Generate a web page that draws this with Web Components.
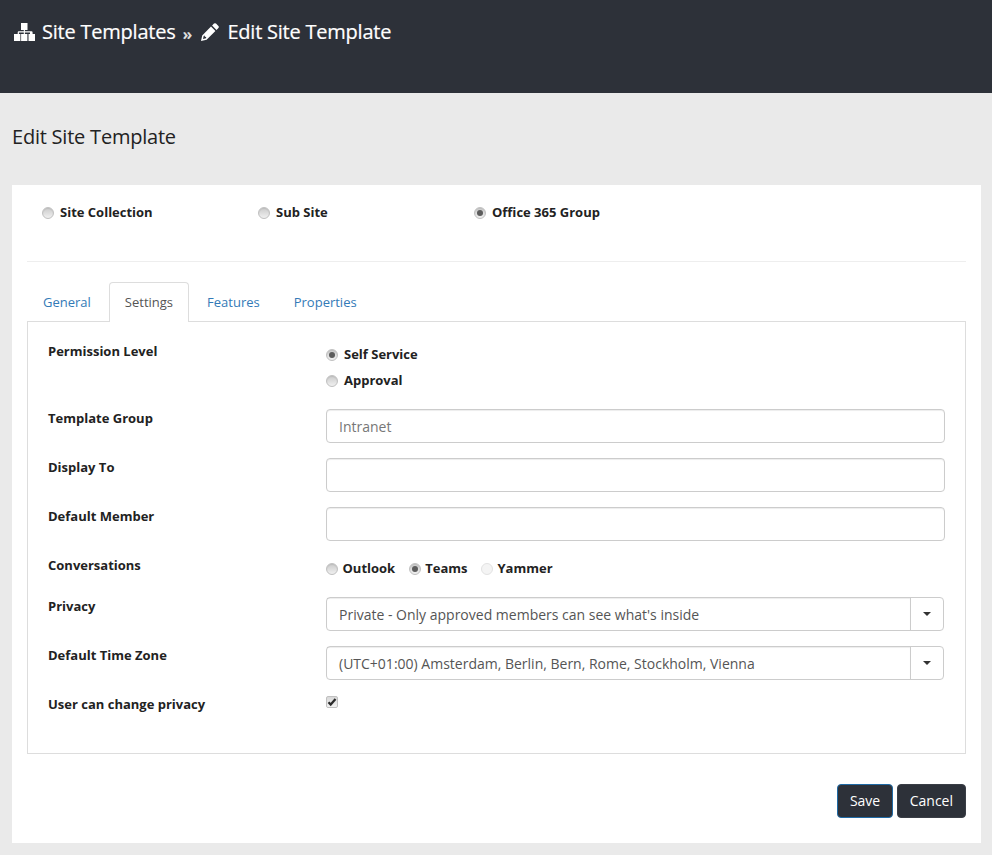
<!DOCTYPE html>
<html><head><meta charset="utf-8"><title>Edit Site Template</title>
<style>
html,body{margin:0;padding:0;background:#eaeaea;font-family:"Open Sans",sans-serif;color:#333;font-size:13px}
</style></head><body>
<page-header>
  <svg slot="a" width="21" height="18" viewBox="0 0 21 18"><path fill="#fff" d="M7 0h6.500v7h-2.600v1.300h6.600a1.100 1.100 0 0 1 1.100 1.100V11H21v7h-6.500v-7h1.500V9.500h-5.100V11h2.500v7H7.100v-7h2.700V9.500H4.900V11h1.500v7H0v-7h3.700V9.400A1.100 1.100 0 0 1 4.800 8.300h5V7H7z"/></svg>
  <span slot="b">Site Templates</span>
  <svg slot="i" width="18" height="18" viewBox="0 0 18 18"><path fill="#fff" d="M13 .6a1.500 1.500 0 0 1 2 0l2.400 2.400a1.500 1.500 0 0 1 0 2L15.500 6.900 11.100 2.500zM10 3.600l4.400 4.400-8.800 8.800L0 18l1.200-5.600zM2.700 13l-.7 3 3-.7 .2-1.200-1.300-.3-.3-1.300z"/></svg>
  <span slot="c">Edit Site Template</span>
</page-header>
<page-title>Edit Site Template</page-title>
<page-card>
  <radio-row>
    <x-radio class="w" label="Site Collection"></x-radio>
    <x-radio class="w" label="Sub Site"></x-radio>
    <x-radio checked label="Office 365 Group"></x-radio>
  </radio-row>
  <x-tabs></x-tabs>
  <tab-panel>
    <form-row label="Permission Level" h="72" pad>
      <radio-stack>
        <x-radio checked label="Self Service"></x-radio>
        <x-radio label="Approval"></x-radio>
      </radio-stack>
    </form-row>
    <form-row label="Template Group" h="49"><x-input value="Intranet"></x-input></form-row>
    <form-row label="Display To" h="49"><x-input></x-input></form-row>
    <form-row label="Default Member" h="49"><x-input></x-input></form-row>
    <form-row label="Conversations" h="41">
      <radio-inline>
        <x-radio tight="4.5" label="Outlook"></x-radio>
        <x-radio tight="4" checked label="Teams"></x-radio>
        <x-radio tight="4" disabled label="Yammer"></x-radio>
      </radio-inline>
    </form-row>
    <form-row label="Privacy" h="49"><x-select value="Private - Only approved members can see what's inside"></x-select></form-row>
    <form-row label="Default Time Zone" h="49"><x-select value="(UTC+01:00) Amsterdam, Berlin, Bern, Rome, Stockholm, Vienna"></x-select></form-row>
    <form-row label="User can change privacy" h="49"><x-check></x-check></form-row>
  </tab-panel>
  <button-bar>
    <x-btn focus>Save</x-btn>
    <x-btn>Cancel</x-btn>
  </button-bar>
</page-card>
<script>
function def(name, css, html, init){
  customElements.define(name, class extends HTMLElement{
    constructor(){super();this.attachShadow({mode:'open'});}
    connectedCallback(){
      const h = typeof html==='function'?html(this):html;
      this.shadowRoot.innerHTML='<style>'+css+'</style>'+h;
      if(init)init(this);
    }
  });
}
def('page-header',
 `:host{display:block;height:93px;box-sizing:border-box;background:#2d3139;color:#fff;padding:18px 14px 0;font-size:20px;line-height:28px;letter-spacing:-.22px;-webkit-text-stroke:.2px #fff}
  .r{display:flex;align-items:center}
  .sep{font-size:16px;line-height:22px;margin:3px 9px 0 7px;font-weight:700;color:#ddd;-webkit-text-stroke:0;letter-spacing:0}
  ::slotted(svg){display:block;flex:none}
  ::slotted([slot=a]){margin-right:7px}
  ::slotted([slot=i]){margin-right:8px}`,
 `<div class="r"><slot name="a"></slot><slot name="b"></slot><span class="sep">»</span><slot name="i"></slot><slot name="c"></slot></div>`);
def('page-title',
 `:host{display:block;box-sizing:border-box;height:92px;padding:30px 12px 0;font-size:20px;line-height:28px;color:#222;letter-spacing:-.22px}`,
 `<slot></slot>`);
def('page-card',
 `:host{display:block;box-sizing:border-box;background:#fff;margin:0 11px 12px 12px;height:658px;padding:0 15px}`,
 `<slot></slot>`);
def('radio-row',
 `:host{display:flex;height:77px;box-sizing:border-box;padding:18px 0 0 15px;border-bottom:1px solid #eee}
  ::slotted(.w){width:216px}`,
 `<slot></slot>`);
def('x-radio',
 `:host{display:inline-flex;align-items:center;height:19px;font-weight:700;font-size:13px;line-height:19px;color:#222;white-space:nowrap}
  .c{width:12px;height:12px;box-sizing:border-box;border-radius:50%;border:1px solid #c0c0c0;background:linear-gradient(#cbcbcb,#f0f0f0);margin-right:6px;position:relative;flex:none;box-shadow:inset 0 1px 1px rgba(0,0,0,.08)}
  .c.on::after{content:"";position:absolute;left:2px;top:2px;width:6px;height:6px;border-radius:50%;background:#5c5c5c}
  .c.off{border-color:#e2e2e2;background:#f4f4f4;box-shadow:none}`,
 el=>`<span class="c ${el.hasAttribute('checked')?'on':''} ${el.hasAttribute('disabled')?'off':''}" ${el.hasAttribute('tight')?`style="margin-right:${el.getAttribute('tight')}px"`:''}></span><span>${el.getAttribute('label')}</span>`);
def('x-tabs',
 `:host{display:flex;box-sizing:border-box;height:60px;padding:20px 0 0 0;position:relative;margin-bottom:-1px;z-index:1}
  a{display:block;box-sizing:border-box;height:40px;padding:0 15px;margin-right:2px;line-height:38px;font-size:13px;color:#337ab7;border:1px solid transparent;border-bottom:0;border-radius:4px 4px 0 0;text-decoration:none}
  a.on{color:#555;background:#fff;border-color:#ddd}`,
 `<a>General</a><a class="on">Settings</a><a>Features</a><a>Properties</a>`);
def('tab-panel',
 `:host{display:block;box-sizing:border-box;height:433px;border:1px solid #ddd;padding:15px 20px 0}`,
 `<slot></slot>`);
def('form-row',
 `:host{display:grid;grid-template-columns:278px 1fr;align-items:start}
  .l{font-weight:700;font-size:13px;line-height:19px;color:#222}
  :host([pad]) .l{padding-top:5px}`,
 el=>{el.style.height=el.getAttribute('h')+'px';return `<div class="l">${el.getAttribute('label')}</div><div><slot></slot></div>`;});
def('radio-stack',
 `:host{display:flex;flex-direction:column;gap:7px;padding-top:8px}`,
 `<slot></slot>`);
def('radio-inline',
 `:host{display:flex;gap:14px;padding-top:3px}`,
 `<slot></slot>`);
def('x-input',
 `:host{display:block;box-sizing:border-box;height:34px;border:1px solid #ccc;border-radius:4px;padding:1px 12px 0;line-height:32px;font-size:14px;color:#555;box-shadow:inset 0 1px 1px rgba(0,0,0,.075);background:#fff}`,
 el=>`<span style="color:#777">${el.getAttribute('value')||''}</span>`);
def('x-select',
 `:host{display:flex;box-sizing:border-box;height:34px;width:618px;border:1px solid #ccc;border-radius:4px;line-height:32px;font-size:14px;color:#555;background:#fff}
  .v{flex:1;padding:1px 12px 0;box-shadow:inset 0 1px 1px rgba(0,0,0,.075);white-space:nowrap;overflow:hidden}
  .b{width:33px;box-sizing:border-box;border-left:1px solid #ccc;display:flex;align-items:center;justify-content:center}
  .b i{width:0;height:0;border:4px solid transparent;border-top-color:#333;border-bottom:0}`,
 el=>`<div class="v">${el.getAttribute('value')}</div><div class="b"><i></i></div>`);
def('x-check',
 `:host{display:block;padding-top:1px}
  span{display:block;width:12px;height:12px;box-sizing:border-box;border:1px solid #c0c0c0;border-radius:2px;background:linear-gradient(#d8d8d8,#f2f2f2)}
  svg{display:block}`,
 `<span><svg width="10" height="10" viewBox="0 0 10 10"><path d="M1.500 5.200l2.200 2.300L8.500 2" fill="none" stroke="#2a2a2a" stroke-width="2.200"/></svg></span>`);
def('button-bar',
 `:host{display:flex;justify-content:flex-end;gap:4px;padding-top:30px}`,
 `<slot></slot>`);
def('x-btn',
 `:host{display:block;box-sizing:border-box;height:34px;padding:0 12px;border:1px solid #3a3e46;border-radius:4px;background:#2d3139;color:#fff;font-size:14px;line-height:32px}
  :host([focus]){border-color:#1f6aa5;padding:0 11.5px}`,
 `<slot></slot>`);
</script>
</body></html>
